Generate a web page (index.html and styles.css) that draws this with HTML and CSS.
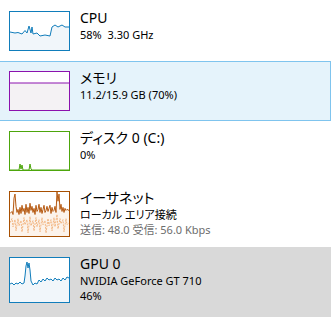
FILE: index.html
```html
<!DOCTYPE html>
<html lang="ja">
  <head>
    <meta charset="UTF-8" />
    <title>パフォーマンス</title>
    <link rel="stylesheet" href="styles.css">
  </head>
  <body>
    <div class="sidebar">
      <div class="item">
        <div class="graph cpu">
          <svg viewBox="0 0 59 38" preserveAspectRatio="none">
            <polygon class="fill" points="0,20 5,21 8,20.5 12,22 15,18.5 17,21 19,14 21,21 22,15 23,22 27,21 30,24 35,23 40,24 42,15 45,13 48,15 52,13 55,15 59,15 59,38 0,38" />
            <polyline class="line" points="0,20 5,21 8,20.5 12,22 15,18.5 17,21 19,14 21,21 22,15 23,22 27,21 30,24 35,23 40,24 42,15 45,13 48,15 52,13 55,15 59,15" />
          </svg>
        </div>
        <div class="info">
          <div class="title">CPU</div>
          <div class="sub">58%&nbsp; 3.30 GHz</div>
        </div>
      </div>

      <div class="item selected">
        <div class="graph mem">
          <svg viewBox="0 0 59 38" preserveAspectRatio="none">
            <rect class="fill" x="0" y="11" width="59" height="27" />
            <line class="line" x1="0" y1="11" x2="59" y2="11" />
          </svg>
        </div>
        <div class="info">
          <div class="title">メモリ</div>
          <div class="sub">11.2/15.9 GB (70%)</div>
        </div>
      </div>

      <div class="item">
        <div class="graph disk">
          <svg viewBox="0 0 59 38" preserveAspectRatio="none">
            <polygon class="fill" points="9,38 10,32 11,37 12,33 13,38 19,38 20,32 21,37 22,38" />
            <polyline class="line" points="0,38 9,38 10,32 11,37 12,33 13,38 19,38 20,32 21,37 22,38 59,38" />
          </svg>
        </div>
        <div class="info">
          <div class="title">ディスク 0 (C:)</div>
          <div class="sub">0%</div>
        </div>
      </div>

      <div class="item tall">
        <div class="graph eth">
          <svg viewBox="0 0 59 43" preserveAspectRatio="none">
            <polygon class="fill" points="0,21 2,19 3,22 4,6 5,2 6,14 7,20 8,17 9,22 10,15 11,21 12,13 13,19 14,16 15,22 16,12 17,20 18,15 19,21 20,11 21,18 22,14 23,20 24,16 25,22 26,13 27,19 28,17 29,12 30,20 31,15 32,21 33,17 34,13 35,20 36,18 37,14 38,19 39,16 40,13 41,21 42,15 43,19 44,18 45,14 46,20 47,0 48,9 49,2 50,17 51,12 52,19 53,15 54,20 55,16 56,18 57,17 59,18 59,43 0,43" />
            <polyline class="send" points="0,30 2,26 3,34 5,27 6,38 8,26 9,33 11,28 12,39 14,25 15,32 17,27 18,40 20,24 21,33 23,28 24,38 26,25 27,34 29,27 30,39 32,25 33,32 35,28 36,40 38,26 39,33 41,27 42,38 44,25 45,34 47,22 48,36 50,26 51,31 53,27 54,39 56,26 57,32 59,30" />
            <polyline class="line" points="0,21 2,19 3,22 4,6 5,2 6,14 7,20 8,17 9,22 10,15 11,21 12,13 13,19 14,16 15,22 16,12 17,20 18,15 19,21 20,11 21,18 22,14 23,20 24,16 25,22 26,13 27,19 28,17 29,12 30,20 31,15 32,21 33,17 34,13 35,20 36,18 37,14 38,19 39,16 40,13 41,21 42,15 43,19 44,18 45,14 46,20 47,0 48,9 49,2 50,17 51,12 52,19 53,15 54,20 55,16 56,18 57,17 59,18" />
          </svg>
        </div>
        <div class="info">
          <div class="title">イーサネット</div>
          <div class="sub">ローカル エリア接続</div>
          <div class="sub muted">送信: 48.0 受信: 56.0 Kbps</div>
        </div>
      </div>

      <div class="item tall hover">
        <div class="graph gpu">
          <svg viewBox="0 0 59 44" preserveAspectRatio="none">
            <polygon class="fill" points="0,26 2,25 4,27 6,25 8,26 10,24 12,26 14,25 15,18 16,8 17,4 18,10 19,5 20,12 21,23 23,27 25,25 27,26 29,22 31,24 33,21 35,23 37,20 39,22 41,21 43,23 45,20 47,22 49,21 51,23 53,20 55,22 57,19 59,20 59,44 0,44" />
            <polyline class="line" points="0,26 2,25 4,27 6,25 8,26 10,24 12,26 14,25 15,18 16,8 17,4 18,10 19,5 20,12 21,23 23,27 25,25 27,26 29,22 31,24 33,21 35,23 37,20 39,22 41,21 43,23 45,20 47,22 49,21 51,23 53,20 55,22 57,19 59,20" />
          </svg>
        </div>
        <div class="info">
          <div class="title">GPU 0</div>
          <div class="sub">NVIDIA GeForce GT 710</div>
          <div class="sub">46%</div>
        </div>
      </div>
    </div>
  </body>
</html>
```

FILE: styles.css
```css
body {
  margin: 0;
  background: #ffffff;
  font-family: "Noto Sans", "Noto Sans CJK JP", sans-serif;
  font-feature-settings: "palt";
  color: #000000;
}

.sidebar {
  width: 331px;
  padding-top: 1px;
}

.item {
  display: flex;
  box-sizing: border-box;
  height: 60px;
  padding: 9px 0 0 9px;
  border: 1px solid transparent;
  border-left: 0;
}

.item.tall {
  height: 66px;
}

.item.selected {
  background: #e5f3fb;
  border-color: #7fc4ee;
}

.item.hover {
  height: 72px;
  background: #d9d9d9;
}

.graph {
  box-sizing: border-box;
  width: 61px;
  height: 40px;
  flex: none;
  border: 1px solid;
  background: #ffffff;
}

.tall .graph {
  height: 46px;
}

.graph svg {
  display: block;
  width: 100%;
  height: 100%;
}

.line {
  fill: none;
  stroke-width: 1;
  vector-effect: non-scaling-stroke;
}

.send {
  fill: none;
  stroke: #f3b784;
  stroke-width: 1;
  stroke-dasharray: 2 1;
  vector-effect: non-scaling-stroke;
}

.cpu, .gpu {
  border-color: #117dbb;
}

.cpu .fill, .gpu .fill {
  fill: #f1f6fa;
}

.cpu .line, .gpu .line {
  stroke: #117dbb;
}

.mem {
  border-color: #8b12ae;
}

.mem .fill {
  fill: #f4f2f4;
}

.mem .line {
  stroke: #8b12ae;
}

.disk {
  border-color: #4da60c;
}

.disk .fill {
  fill: #eff7e9;
}

.disk .line {
  stroke: #4da60c;
}

.eth {
  border-color: #a74f01;
}

.eth .fill {
  fill: #fcf3eb;
}

.eth .line {
  stroke: #b65a12;
}

.info {
  margin: -2px 0 0 10px;
  white-space: nowrap;
}

.title {
  font-size: 14px;
  line-height: 18px;
}

.sub {
  font-size: 11px;
  line-height: 15px;
}

.muted {
  color: #6d6d6d;
}
```
